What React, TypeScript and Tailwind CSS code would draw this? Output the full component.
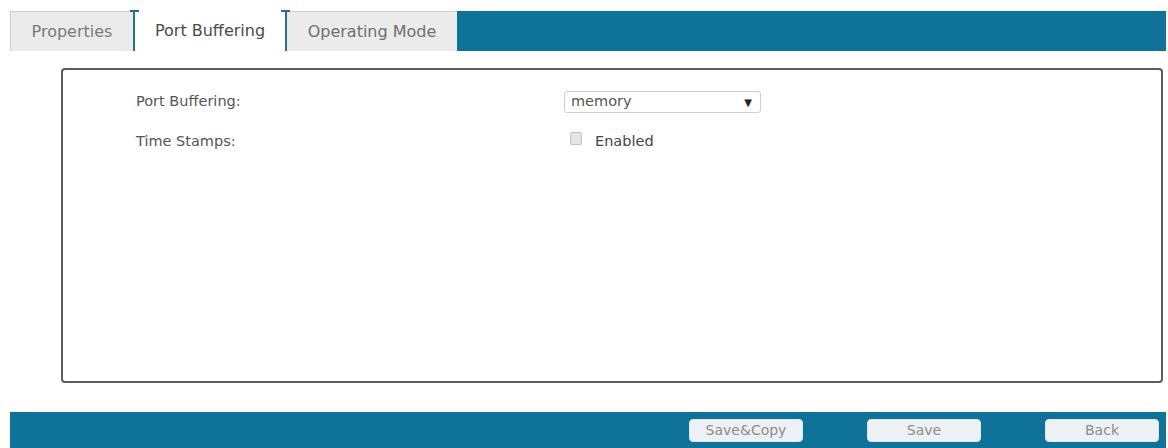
const BLUE = 'bg-[#0f7299]'

function Cap({ side }: { side: 'left' | 'right' }) {
  // little T-shaped cap on top of the active tab borders
  return (
    <span
      className={
        side === 'left'
          ? 'absolute -left-[5px] -top-[1px] h-[2px] w-[9px] bg-[#2b6f8c]'
          : 'absolute -right-[5px] -top-[1px] h-[2px] w-[9px] bg-[#2b6f8c]'
      }
    />
  )
}

export default function App() {
  return (
    <div className="h-[448px] w-[1168px] overflow-hidden bg-white pl-[10px] pr-[2px] pt-[11px] font-['DejaVu_Sans',sans-serif]">
      {/* Tabs */}
      <div className={`flex h-[40px] ${BLUE}`}>
        <div className="flex w-[123px] items-center justify-center border-t border-l border-[#cfcfcf] bg-[#ebebeb] text-[16px] text-[#7a7a7a]">
          Properties
        </div>
        <div className="relative flex w-[154px] items-center justify-center border-x-[2px] border-[#2b6f8c] bg-white text-[16px] text-[#4a4a4a]">
          <Cap side="left" />
          <Cap side="right" />
          Port Buffering
        </div>
        <div className="flex w-[170px] items-center justify-center border-t border-[#cfcfcf] bg-[#ebebeb] text-[16px] text-[#6f6f6f]">
          Operating Mode
        </div>
      </div>

      {/* Panel */}
      <div className="ml-[51px] mr-[3px] mt-[17px] h-[315px] rounded-[4px] border-2 border-[#5c5c5c] pl-[73px] pt-[21px] text-[14.5px] text-[#555]">
        <div className="grid grid-cols-[428px_1fr] items-center gap-y-[16px]">
          <div>Port Buffering:</div>
          <div className="flex h-[22px] w-[197px] items-center justify-between rounded-[3px] border border-[#cfcfcf] pl-[6px] pr-[8px] text-[#555]">
            <span>memory</span>
            <span className="text-[10px] text-[#222]">▼</span>
          </div>
          <div className="translate-y-[2px]">Time Stamps:</div>
          <div className="flex h-[22px] items-center gap-[13px] pl-[6px]">
            <span className="h-[13px] w-[12px] -translate-y-[2px] rounded-[2px] border border-[#c4c4c4] bg-[#e4e4e4]" />
            <span className="translate-y-[2px] text-[#444]">Enabled</span>
          </div>
        </div>
      </div>

      {/* Bottom bar */}
      <div className={`mt-[29px] flex h-[40px] items-start justify-end gap-[64px] pr-[7px] pt-[7px] ${BLUE}`}>
        {['Save&Copy', 'Save', 'Back'].map((label) => (
          <button
            key={label}
            className="h-[23px] w-[114px] rounded-[4px] border border-[#dfe6ea] bg-[#eef1f3] text-[14px] text-[#8c8c8c]"
          >
            {label}
          </button>
        ))}
      </div>
    </div>
  )
}
